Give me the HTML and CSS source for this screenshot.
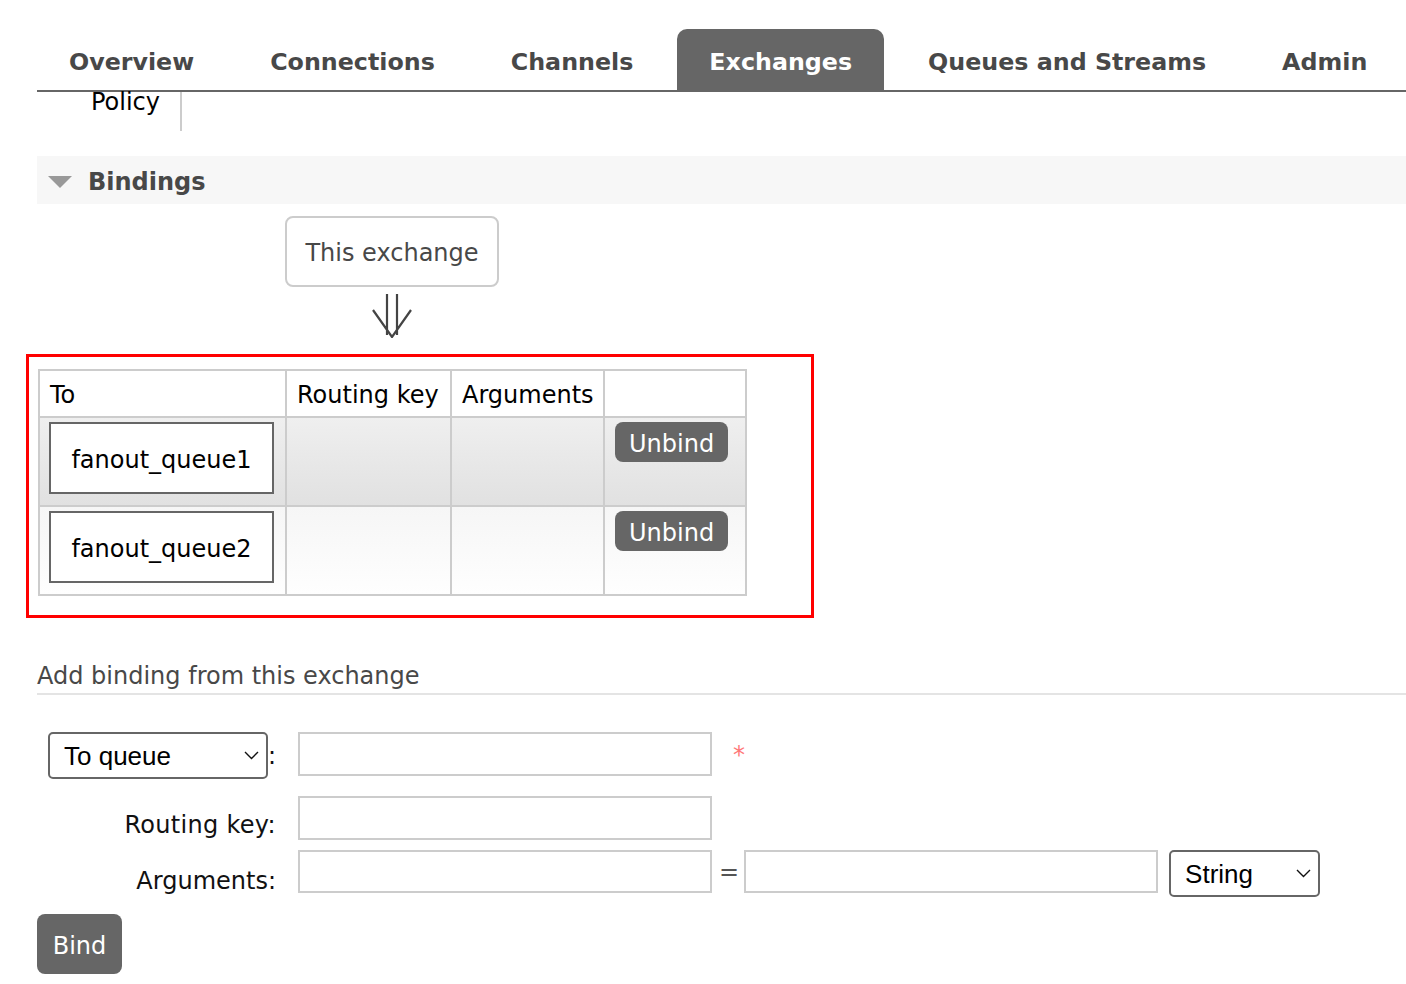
FILE: index.html
```html
<!DOCTYPE html>
<html lang="en">
<head>
<meta charset="utf-8">
<title>Exchange bindings</title>
<link rel="stylesheet" href="styles.css">
</head>
<body>
<div class="page">
  <nav class="tabs">
    <a class="tab">Overview</a>
    <a class="tab">Connections</a>
    <a class="tab">Channels</a>
    <a class="tab active">Exchanges</a>
    <a class="tab">Queues and Streams</a>
    <a class="tab">Admin</a>
  </nav>

  <div class="policy-row"><div class="policy-cell">Policy</div></div>

  <section class="bindings">
    <div class="section-head"><span class="tri"></span><h2 class="section-title">Bindings</h2></div>

    <div class="exchange-box">This exchange</div>
    <svg class="arrow" width="40" height="46" viewBox="0 0 40 46">
      <path d="M15 2 V43 M25 2 V43 M1 18 L20 45 L39 18" fill="none" stroke="#444" stroke-width="2.2"/>
    </svg>

    <div class="highlight">
      <div class="bind-table">
        <div class="cell head">To</div>
        <div class="cell head">Routing key</div>
        <div class="cell head">Arguments</div>
        <div class="cell head"></div>

        <div class="cell alt1"><div class="queue-box">fanout_queue1</div></div>
        <div class="cell alt1"></div>
        <div class="cell alt1"></div>
        <div class="cell alt1"><button class="btn unbind">Unbind</button></div>

        <div class="cell alt2"><div class="queue-box">fanout_queue2</div></div>
        <div class="cell alt2"></div>
        <div class="cell alt2"></div>
        <div class="cell alt2"><button class="btn unbind">Unbind</button></div>
      </div>
    </div>

    <h3 class="add-title">Add binding from this exchange</h3>

    <form class="bind-form">
      <div class="frow r1">
        <div class="flabel center">
          <span class="sel-wrap dest">
            <select class="sel"><option>To queue</option><option>To exchange</option></select>
            <svg class="chev" width="15" height="9" viewBox="0 0 15 9"><path d="M1 1 L7.5 7.5 L14 1" fill="none" stroke="#111" stroke-width="1.4"/></svg>
          </span><span class="colon">:</span>
        </div>
        <input class="finput" type="text">
        <span class="req">*</span>
      </div>
      <div class="frow r2">
        <label class="flabel text">Routing key:</label>
        <input class="finput" type="text">
      </div>
      <div class="frow r3">
        <label class="flabel text">Arguments:</label>
        <input class="finput" type="text">
        <span class="eq">=</span>
        <input class="finput" type="text">
        <span class="sel-wrap type">
          <select class="sel"><option>String</option><option>Number</option><option>Boolean</option></select>
          <svg class="chev" width="15" height="9" viewBox="0 0 15 9"><path d="M1 1 L7.5 7.5 L14 1" fill="none" stroke="#111" stroke-width="1.4"/></svg>
        </span>
      </div>
      <button type="button" class="btn bind">Bind</button>
    </form>
  </section>
</div>
</body>
</html>
```

FILE: styles.css
```css
html, body {
  margin: 0;
  padding: 0;
  background: #fff;
}
body {
  font-family: "DejaVu Sans", Verdana, sans-serif;
  font-size: 24px;
  color: #000;
}
.page {
  padding-left: 37px;
}

/* tabs */
.tabs {
  display: flex;
  margin-top: 29px;
  border-bottom: 2px solid #666;
}
.tab {
  box-sizing: border-box;
  height: 61px;
  padding: 19px 32px 0;
  margin-right: 12px;
  line-height: 28px;
  font-size: 23.75px;
  font-weight: bold;
  color: #484848;
  text-decoration: none;
  white-space: nowrap;
}
.tab.active {
  background: #666;
  color: #fff;
  border-radius: 10px 10px 0 0;
}

/* policy fragment */
.policy-cell {
  box-sizing: border-box;
  width: 145px;
  height: 39px;
  border-right: 2px solid #ccc;
  text-align: right;
  padding-right: 20px;
  line-height: 20px;
}

/* section header */
.section-head {
  display: flex;
  align-items: center;
  margin-top: 25px;
  height: 48px;
  background: #f7f7f7;
  padding-left: 11px;
}
.tri {
  width: 0;
  height: 0;
  border-left: 12px solid transparent;
  border-right: 12px solid transparent;
  border-top: 12px solid #999;
  margin-right: 16px;
  margin-top: 3px;
}
.section-title {
  margin: 0;
  padding-top: 4px;
  font-size: 24px;
  line-height: 28px;
  font-weight: bold;
  color: #484848;
}

/* exchange box + arrow */
.exchange-box {
  box-sizing: border-box;
  margin: 12px 0 0 248px;
  width: 214px;
  height: 71px;
  padding-top: 2px;
  border: 2px solid #ccc;
  border-radius: 8px;
  display: flex;
  align-items: center;
  justify-content: center;
  color: #484848;
}
.arrow {
  display: block;
  margin: 5px 0 0 335px;
}

/* red highlight + table */
.highlight {
  box-sizing: border-box;
  margin: 16px 0 0 -11px;
  width: 788px;
  height: 264px;
  border: 3px solid #f00;
  padding: 12px 0 0 9px;
}
.bind-table {
  display: grid;
  grid-template-columns: 247px 165px 153px 142px;
  grid-template-rows: 47px 89px 89px;
  width: max-content;
  border-top: 2px solid #ccc;
  border-left: 2px solid #ccc;
}
.cell {
  box-sizing: border-box;
  border-right: 2px solid #ccc;
  border-bottom: 2px solid #ccc;
  padding: 4px 10px 0;
}
.cell.head {
  display: flex;
  align-items: center;
  padding: 2px 10px 0;
  background: #fff;
  white-space: nowrap;
}
.cell.alt1 {
  background: linear-gradient(#efefef, #e1e1e1);
}
.cell.alt2 {
  background: linear-gradient(#f6f6f6, #fefefe);
}
.queue-box {
  box-sizing: border-box;
  width: 225px;
  height: 72px;
  margin-left: -1px;
  padding-top: 3px;
  border: 2px solid #666;
  background: #fff;
  display: flex;
  align-items: center;
  justify-content: center;
}
.btn {
  font-family: "DejaVu Sans", Verdana, sans-serif;
  font-size: 24px;
  color: #fff;
  background: #666;
  border: none;
  border-radius: 8px;
  cursor: pointer;
}
.btn.unbind {
  display: block;
  height: 40px;
  padding: 4px 14px 0;
  line-height: 36px;
}

/* add binding */
.add-title {
  margin: 43px 0 0;
  padding-top: 1px;
  font-size: 24px;
  line-height: 28px;
  font-weight: normal;
  color: #484848;
  padding-bottom: 3px;
  border-bottom: 2px solid #e4e4e4;
}
.bind-form {
  margin-top: 37px;
}
.frow {
  display: flex;
  align-items: flex-start;
}
.frow.r1 { margin-bottom: 17px; }
.frow.r2 { margin-bottom: 10px; }
.frow.r3 { margin-bottom: 17px; }
.flabel {
  box-sizing: border-box;
  width: 239px;
  display: flex;
  justify-content: flex-end;
  line-height: 28px;
  color: #111;
}
.flabel.center {
  align-items: center;
  height: 47px;
}
.flabel.text {
  padding-top: 15px;
}
.frow.r2 .flabel.text {
  letter-spacing: 0.3px;
}
.frow.r3 .flabel.text {
  padding-top: 17px;
}
.colon {
  width: 8px;
  text-align: right;
}
.finput {
  box-sizing: border-box;
  width: 414px;
  height: 44px;
  margin: 0 0 0 22px;
  border: 2px solid #ccc;
  background: #fff;
  font-size: 24px;
  padding: 0 8px;
  outline: none;
}
.frow.r3 .finput { height: 43px; }
.frow.r3 .finput + .eq + .finput { margin-left: 0; }
.eq {
  padding-top: 8px;
  line-height: 28px;
  margin: 0 5px 0 7px;
  color: #555;
}
.req {
  margin-left: 21px;
  padding-top: 9px;
  line-height: 28px;
  color: #f77;
}
.sel-wrap {
  position: relative;
  display: block;
}
.sel-wrap.dest { width: 220px; height: 47px; }
.sel-wrap.type { width: 151px; height: 47px; margin-left: 11px; }
.sel {
  box-sizing: border-box;
  width: 100%;
  height: 100%;
  -webkit-appearance: none;
  appearance: none;
  border: 2px solid #666;
  border-radius: 5px;
  background: #fff;
  font-family: "Liberation Sans", Arial, sans-serif;
  font-size: 26px;
  color: #000;
  padding: 0 30px 0 14px;
  margin: 0;
}
.chev {
  position: absolute;
  right: 9px;
  top: 19px;
  pointer-events: none;
}
.btn.bind {
  display: block;
  width: 85px;
  height: 60px;
  padding: 3px 0 0;
  text-align: center;
}
```
